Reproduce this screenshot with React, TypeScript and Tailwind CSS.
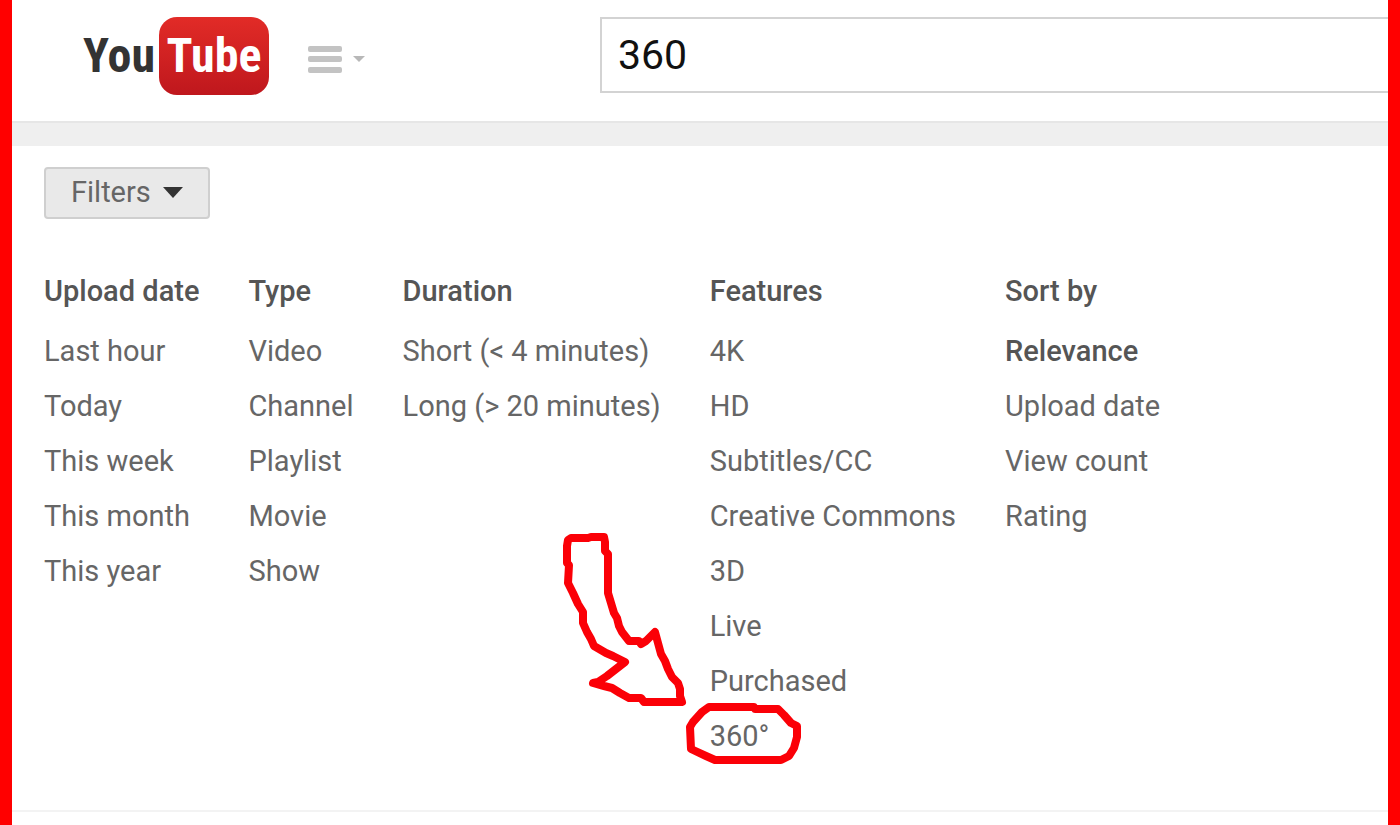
import {useState} from "react";

// Filter groups shown under the "Filters" button
const filterGroups = [
  {
    title: "Upload date",
    items: ["Last hour", "Today", "This week", "This month", "This year"],
  },
  {
    title: "Type",
    items: ["Video", "Channel", "Playlist", "Movie", "Show"],
  },
  {
    title: "Duration",
    items: ["Short (< 4 minutes)", "Long (> 20 minutes)"],
  },
  {
    title: "Features",
    items: [
      "4K",
      "HD",
      "Subtitles/CC",
      "Creative Commons",
      "3D",
      "Live",
      "Purchased",
      "360°",
    ],
  },
  {
    title: "Sort by",
    items: ["Relevance", "Upload date", "View count", "Rating"],
  },
];

const Logo = () => (
  <a
    href="#home"
    aria-label="YouTube"
    className="flex items-center font-['Roboto_Condensed','Liberation_Sans_Narrow',sans-serif] text-5xl font-bold"
  >
    <span className="text-[#333333]">You</span>
    <span className="ml-1 flex h-[78px] w-[110px] items-center justify-center rounded-[18px] bg-linear-to-b from-[#e22b27] to-[#bf171d] text-white">
      Tube
    </span>
  </a>
);

// Hand drawn arrow and circle that point out the 360° filter
const Annotation = () => (
  <svg
    viewBox="0 0 280 260"
    fill="none"
    stroke="#fb0007"
    strokeWidth="8"
    strokeLinejoin="round"
    strokeLinecap="round"
    aria-hidden="true"
    className="pointer-events-none absolute -top-[189px] -left-[168px] h-[260px] w-[280px]"
  >
    <path d="M26 20 L29 18 L46 18 L49 17 L62 17 L63 22 L63 31 L66 34 L66 73 L69 83 L72 93 L75 98 L77 106 L80 112 L87 121 L97 121 L99 124 L104 121 L113 112 L116 123 L119 134 L123 141 L126 149 L130 157 L136 163 L138 169 L138 176 L140 182 L102 182 L99 178 L87 178 L78 173 L70 168 L62 166 L51 163 L56 162 L65 156 L83 142 L71 136 L64 133 L52 126 L49 119 L45 112 L41 103 L41 92 L36 84 L31 73 L26 63 L27 45 L25 43 L25 26 Z" />
    <path d="M167 187 L212 187 L213 189 L236 189 L242 195 L249 203 L255 206 L255 217 L252 228 L247 236 L239 240 L173 240 L164 236 L149 229 L148 207 L151 202 L160 192 Z" />
  </svg>
);

const App = () => {
  const [query, setQuery] = useState("360");
  const [open, setOpen] = useState(true);
  const [sortBy, setSortBy] = useState("Relevance");

  return (
    <div className="min-h-screen overflow-hidden border-x-[12px] border-[#ff0000] bg-white font-[Roboto,sans-serif] text-[#5a5a5a]">
      {/* Header */}
      <header className="flex items-start">
        <div className="flex w-[588px] shrink-0 items-center pt-[17px] pl-[71px]">
          <Logo />
          <button
            type="button"
            aria-label="Guide"
            className="mt-1.5 ml-[38px] flex items-center gap-2.5"
          >
            <svg width="36" height="30" viewBox="0 0 36 30" fill="#c3c3c3">
              <rect x="1" y="2" width="34" height="6" rx="2" />
              <rect x="1" y="12" width="34" height="6" rx="2" />
              <rect x="1" y="23" width="34" height="6" rx="2" />
            </svg>
            <svg width="12" height="8" viewBox="0 0 12 8" fill="#b8b8b8">
              <path d="M0 1h12L6 7z" />
            </svg>
          </button>
        </div>
        <input
          type="text"
          aria-label="Search"
          value={query}
          onChange={e => setQuery(e.target.value)}
          className="mt-[17px] mb-7 h-[76px] min-w-0 flex-1 border-2 border-r-0 border-[#d3d3d3] px-4 text-[41px] text-[#111111] outline-none"
        />
      </header>
      <div className="h-[25px] border-t-2 border-[#e6e6e6] bg-[#efefef]" />

      {/* Filters */}
      <main className="border-b-2 border-[#f3f3f3] px-8 pt-[21px] pb-[46px]">
        <button
          type="button"
          aria-expanded={open}
          onClick={() => setOpen(!open)}
          className="flex h-[52px] items-center gap-3 rounded-sm border-2 border-[#cfcfcf] bg-[#e9e9e9] px-[25px] text-[29px] text-[#666666]"
        >
          Filters
          <svg width="20" height="12" viewBox="0 0 20 12" fill="#333333">
            <path d="M0 0h20L10 11z" />
          </svg>
        </button>

        {open && (
          <div className="mt-[45px] flex gap-[49px] text-[29px] whitespace-nowrap">
            {filterGroups.map(group => (
              <section key={group.title}>
                <h2 className="mb-[5px] leading-[55px] font-medium text-[#555555]">
                  {group.title}
                </h2>
                <ul>
                  {group.items.map(item => (
                    <li key={item} className="relative leading-[55px]">
                      <a
                        href="#filter"
                        onClick={() =>
                          group.title === "Sort by" && setSortBy(item)
                        }
                        className={
                          group.title === "Sort by" && sortBy === item
                            ? "font-medium text-[#555555]"
                            : "text-[#666666]"
                        }
                      >
                        {item}
                      </a>
                      {item === "360°" && <Annotation />}
                    </li>
                  ))}
                </ul>
              </section>
            ))}
          </div>
        )}
      </main>
    </div>
  );
};

export default App;
